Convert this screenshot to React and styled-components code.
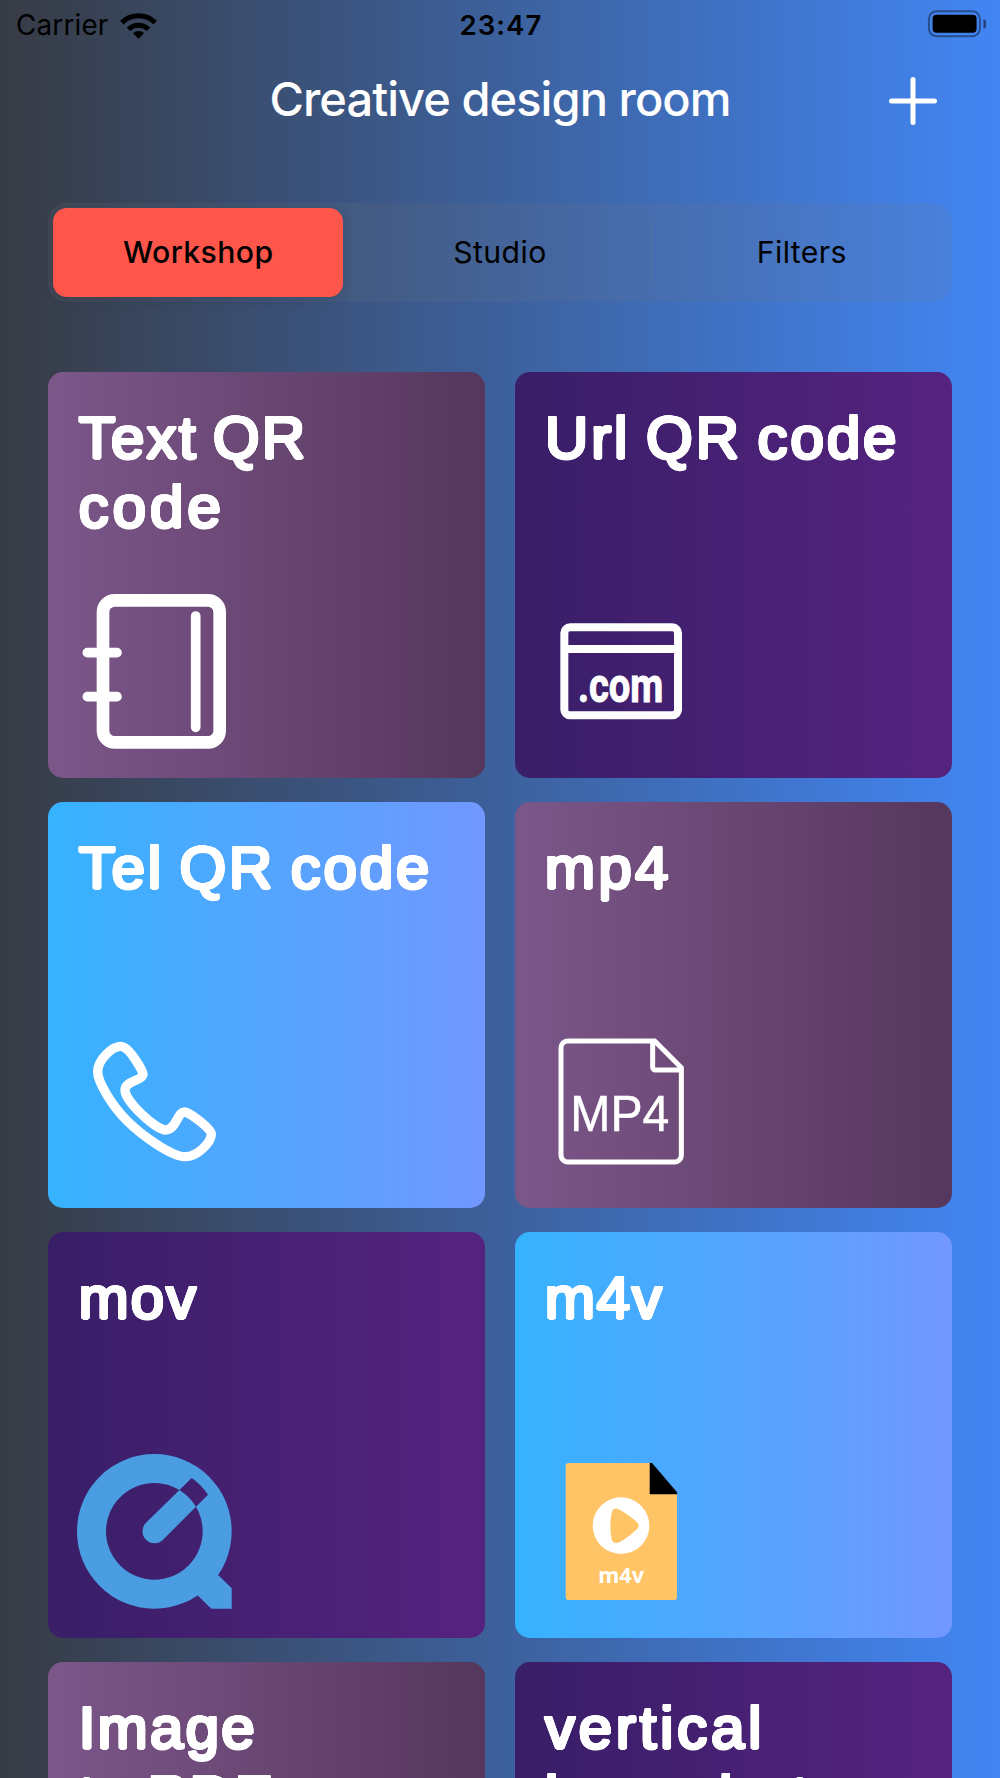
import React from "react";
import styled, { createGlobalStyle } from "styled-components";

const GlobalStyle = createGlobalStyle`
  * { box-sizing: border-box; }
  html, body { margin: 0; padding: 0; }
  body { overflow: hidden; font-family: Inter, "Liberation Sans", sans-serif; }
`;

const gradients = {
  plum: ["#7b5689 2%", "#56375d 98%"],
  violet: ["#391e68 2%", "#55237f 98%"],
  sky: ["#37b2fe 2%", "#7098ff 98%"],
};

// Offsets on a small circle: they thicken the letters and round their ends.
const roundedEdge = Array.from({ length: 16 }, (_, i) => {
  const a = (i * Math.PI) / 8;
  return `${(1.5 * Math.cos(a)).toFixed(2)}px ${(1.5 * Math.sin(a)).toFixed(2)}px 0 #fff`;
}).join(", ");

const Screen = styled.main`
  width: 1000px;
  height: 1778px;
  overflow: hidden;
  display: flex;
  flex-direction: column;
  background: linear-gradient(90deg, #373b44, #4286f4);
`;

const StatusBar = styled.div`
  height: 50px;
  flex: none;
  display: grid;
  grid-template-columns: 1fr auto 1fr;
  align-items: center;
  padding: 0 14px 0 16px;
  color: #000;
`;

const Carrier = styled.div`
  display: flex;
  align-items: center;
  gap: 11px;
  font-size: 27.8px;
  letter-spacing: 0.2px;
`;

const Clock = styled.time`
  font-size: 27.6px;
  font-weight: 600;
  letter-spacing: 1px;
`;

const Battery = styled.svg`
  justify-self: end;
  margin-top: -2px;
`;

const Header = styled.header`
  height: 153px;
  flex: none;
  display: grid;
  grid-template-columns: 1fr auto 1fr;
  padding: 21px 62px 0;
`;

const Title = styled.h1`
  grid-column: 2;
  margin: 0;
  font-size: 47px;
  line-height: 56px;
  font-weight: 500;
  letter-spacing: -0.95px;
  color: #fff;
`;

const AddButton = styled.button`
  justify-self: end;
  align-self: start;
  margin-top: 5px;
  width: 50px;
  height: 50px;
  padding: 0;
  border: 0;
  background: none;
  display: flex;
`;

const Segments = styled.nav`
  height: 99px;
  flex: none;
  margin: 0 48px;
  padding: 5px 5.3px;
  display: grid;
  grid-template-columns: 1fr 12px 1fr 12px 1fr;
  align-items: center;
  justify-items: center;
  border-radius: 18px;
  background: rgba(118, 118, 128, 0.14);
`;

const Segment = styled.button`
  width: 100%;
  height: 89px;
  border: 0;
  padding: 0 0 2px;
  border-radius: 14px;
  font: ${(p) => (p.$active ? 500 : 400)} 30.2px Inter, sans-serif;
  letter-spacing: 0.4px;
  color: #000;
  background: ${(p) => (p.$active ? "#ff564c" : "none")};
  box-shadow: ${(p) => (p.$active ? "0 3px 12px rgba(0, 0, 0, 0.1)" : "none")};
`;

const Divider = styled.span`
  width: 2px;
  height: 66px;
  border-radius: 1px;
  background: ${(p) => (p.$hidden ? "transparent" : "rgba(118, 118, 128, 0.2)")};
`;

const Grid = styled.section`
  flex: none;
  margin: 70px 48.3px 0;
  display: grid;
  grid-template-columns: 437.2px 437.2px;
  justify-content: space-between;
  grid-auto-rows: 405.6px;
  row-gap: 24.4px;
`;

const Card = styled.article`
  display: flex;
  flex-direction: column;
  justify-content: space-between;
  align-items: flex-start;
  padding: 30.6px 0 28.8px 29px;
  border-radius: 15px;
  background: linear-gradient(90deg, ${(p) => gradients[p.$tone].join(", ")});
`;

const CardTitle = styled.h2`
  margin: 0 0 0 1.4px;
  font: 400 60px/69px "Liberation Sans", Arial, sans-serif;
  word-spacing: -4px;
  color: #fff;
  white-space: nowrap;
  text-shadow: ${roundedEdge};
`;

const TitleLine = styled.span`
  display: block;
  letter-spacing: ${(p) => p.$tracking}px;
`;

const Icon = styled.svg`
  width: 154.7px;
  height: 154.7px;
  flex: none;
  display: block;
  overflow: visible;
`;

const Notebook = () => (
  <Icon viewBox="112 702 464 464" fill="none" stroke="#fff" strokeLinecap="round">
    <rect x="190" y="721" width="350" height="426" rx="35" strokeWidth="38" />
    <path d="M468 768V1102M143 878H232M143 1010H232" strokeWidth="29" />
  </Icon>
);

const Domain = () => (
  <Icon viewBox="131 702 464 464" fill="none" stroke="#fff" strokeWidth="24">
    <rect x="192" y="802" width="341" height="264" rx="17" />
    <path d="M192 867H533" />
    <text x="233" y="1026" textLength="256" lengthAdjust="spacingAndGlyphs" fill="#fff" stroke="#fff" strokeWidth="3" fontFamily="Roboto, sans-serif" fontWeight="700" fontSize="142">.com</text>
  </Icon>
);

const Phone = () => (
  <Icon viewBox="112 702 464 464" fill="none" stroke="#fff" strokeWidth="28" strokeLinejoin="round">
    <path d="M243 769C215 769 174 812 174 845C174 875 215 945 262 992C305 1035 395 1100 437 1100C472 1100 515 1058 515 1032C515 1016 455 973 440 967C413 957 412 1020 378 1020C350 1020 256 935 256 900C256 872 310 872 310 852C310 845 270 769 243 769Z" />
  </Icon>
);

const Mp4File = () => (
  <Icon viewBox="131 702 464 464" fill="none" stroke="#fff" strokeWidth="15">
    <path d="M463 753H202a20 20 0 0 0-20 20V1096a20 20 0 0 0 20 20H523a20 20 0 0 0 20-20V833Z" />
    <path d="M457 753V832a8 8 0 0 0 8 8H543" />
    <text x="210" y="1022" textLength="297" lengthAdjust="spacingAndGlyphs" fill="#fff" stroke="#fff" strokeWidth="1.5" fontFamily="Liberation Sans, Arial, sans-serif" fontSize="151">MP4</text>
  </Icon>
);

const QuickTime = () => (
  <Icon viewBox="112 702 464 464" fill="#4a9de1">
    <path fillRule="evenodd" d="M344 702a232 232 0 1 0 0 464a232 232 0 1 0 0-464ZM344 789a145 145 0 1 0 0 290a145 145 0 1 0 0-290ZM456 774L319 908A36 36 0 0 0 370 959L505 824Q484 793 456 774Z" />
    <path d="M536 1066L576 1105V1166H515L475 1127L490 1070Z" />
  </Icon>
);

const M4vFile = () => (
  <Icon viewBox="131 702 464 464">
    <path fill="#ffc466" d="M206 729H450L530 822V1130a10 10 0 0 1-10 10H206a10 10 0 0 1-10-10V739a10 10 0 0 1 10-10Z" />
    <path fill="#000" d="M448 729H455L530 817V823H448Z" />
    <circle cx="362" cy="917" r="85" fill="#fff" />
    <path fill="#ffc466" d="M350 866C362 868 402 897 412 909Q418 917 412 925C402 937 365 966 350 969Q337 971 334 958Q326 917 334 879Q338 864 350 866Z" />
    <text x="294" y="1089" textLength="137" lengthAdjust="spacingAndGlyphs" fill="#fff" fontFamily="Noto Sans, sans-serif" fontWeight="700" fontSize="64">m4v</text>
  </Icon>
);

const cards = [
  { lines: [["Text QR", 2.3], ["code", 4]], tone: "plum", icon: Notebook },
  { lines: [["Url QR code", 2.95]], tone: "violet", icon: Domain },
  { lines: [["Tel QR code", 2.85]], tone: "sky", icon: Phone },
  { lines: [["mp4", 3.4]], tone: "plum", icon: Mp4File },
  { lines: [["mov", 2]], tone: "violet", icon: QuickTime },
  { lines: [["m4v", 1.8]], tone: "sky", icon: M4vFile },
  { lines: [["Image", 2.3], ["to PDF", 2]], tone: "plum" },
  { lines: [["vertical", 3.8], ["long shot", 3]], tone: "violet" },
];

export default function App() {
  return (
    <>
      <GlobalStyle />
      <Screen>
        <StatusBar>
          <Carrier>
            Carrier
            <svg width="37" height="27" viewBox="0 0 37 27" fill="none" stroke="#000" strokeWidth="5">
              <path d="M1.8 10.6A24 24 0 0 1 35.2 10.6" />
              <path d="M8.5 17.3A14.3 14.3 0 0 1 28.5 17.3" />
              <path d="M13 21.2A8 8 0 0 1 24 21.2L18.5 26.8Z" fill="#000" stroke="none" />
            </svg>
          </Carrier>
          <Clock>23:47</Clock>
          <Battery width="59" height="28" viewBox="0 0 59 28">
            <rect x="1.9" y="1.2" width="51" height="25" rx="7.5" fill="none" stroke="#000" strokeOpacity="0.4" strokeWidth="2" />
            <rect x="5.6" y="4.8" width="44" height="18" rx="4" />
            <path d="M56.5 9Q60 11 60 14T56.5 19Z" fillOpacity="0.5" />
          </Battery>
        </StatusBar>
        <Header>
          <Title>Creative design room</Title>
          <AddButton aria-label="Add">
            <svg width="50" height="50" viewBox="0 0 50 50" stroke="#fff" strokeWidth="5" strokeLinecap="round">
              <path d="M25 3.5V46.5M3.5 25H46.5" />
            </svg>
          </AddButton>
        </Header>
        <Segments>
          <Segment $active>Workshop</Segment>
          <Divider $hidden />
          <Segment>Studio</Segment>
          <Divider />
          <Segment>Filters</Segment>
        </Segments>
        <Grid>
          {cards.map(({ lines, tone, icon: CardIcon }) => (
            <Card key={lines[0][0]} $tone={tone}>
              <CardTitle>
                {lines.map(([text, tracking]) => (
                  <TitleLine key={text} $tracking={tracking}>{text}</TitleLine>
                ))}
              </CardTitle>
              {CardIcon && <CardIcon />}
            </Card>
          ))}
        </Grid>
      </Screen>
    </>
  );
}
